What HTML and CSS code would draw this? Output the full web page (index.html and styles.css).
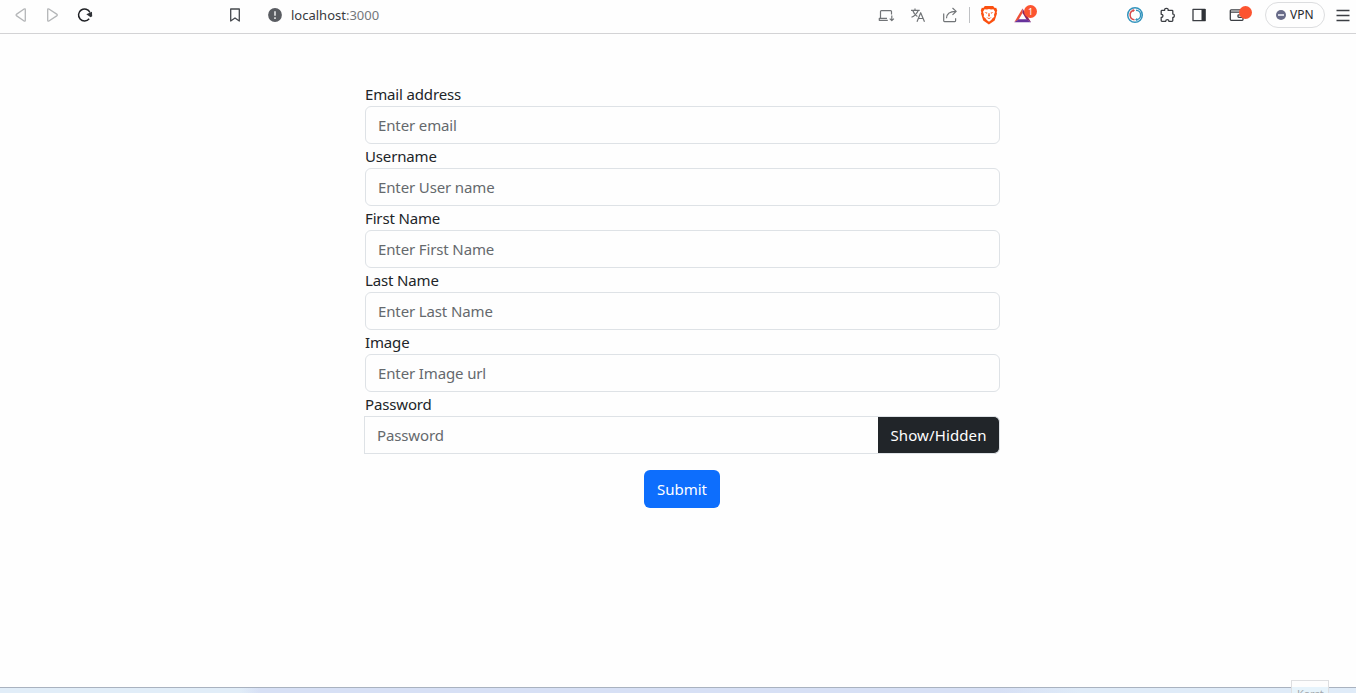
FILE: index.html
```
<!DOCTYPE html>
<html lang="en">
<head>
<meta charset="utf-8">
<title>Sign up</title>
<link rel="stylesheet" href="styles.css">
</head>
<body>
<header class="toolbar">
  <nav class="navigation">
    <svg class="icon faded" viewBox="0 0 20 20"><path d="M14.3 4.7v10.6q0 1.3-1.2.7L5.700 10.900q-1.200-.9 0-1.800l7.400-5.100q1.200-.6 1.200.7z"/></svg>
    <svg class="icon faded" viewBox="0 0 20 20"><path d="M4.700 4.700v10.600q0 1.300 1.200.7l7.800-5.100q1.200-.9 0-1.800L5.900 4q-1.200-.6-1.200.7z"/></svg>
    <svg class="icon reload" viewBox="0 0 20 20"><path d="M14.200 13.800A6 6 0 1 1 15 7.500"/><path class="solid" d="M11.300 9.200l5.600-2.500.3 4.600-1.600 1z"/></svg>
  </nav>
  <svg class="icon bookmark" viewBox="0 0 20 20"><path d="M5.700 4h8.600v12L10 13l-4.300 3z"/></svg>
  <div class="address">
    <svg class="icon" viewBox="0 0 20 20"><circle class="info" cx="10" cy="10" r="6.900"/><path class="mark" d="M10 6.300v4.500M10 12.200v1.700"/></svg>
    <span class="url">localhost<span class="port">:3000</span></span>
  </div>
  <div class="page-actions">
    <svg class="icon grey" viewBox="0 0 20 20"><path d="M11 13.300H3.300v2h8.500M4.500 12.800V6.500q0-.9.900-.9h9.200q.9 0 .9.900v3M15.800 10.500v5M13.700 13.600l2.100 2 2.100-2"/></svg>
    <svg class="icon grey" viewBox="0 0 20 20"><path d="M3 5.300h8.700M7 3.400v1.800M10.200 5.500Q8 10.500 3.500 12.200M4.800 5.500Q6 9.500 9.400 11.500M9 16.700l3.700-9 3.800 9M10.400 13.500H15"/></svg>
    <svg class="icon grey" viewBox="0 0 20 20"><path d="M3.700 8.500v7.300q0 .8.800.8h10.300q.8 0 .8-.8v-2.600M6.500 13.300q.2-7 9.300-7M12.500 3l3.700 3.400-3.700 3.500"/></svg>
  </div>
  <span class="divider"></span>
  <svg class="icon brave" viewBox="0 0 20 20"><path class="shield" d="M5.800.9h8.300l1.700 2 1.400-.1 1 2.700-.6 1.700.4 1.200-2.300 7.200-5.800 3.900-5.700-3.900-2.200-7.200.4-1.200-.6-1.700 1-2.700 1.500.1z"/><path class="lion" d="M5.500 4.300l2.500.3L10 4l2 .6 2.500-.3 1.500 2.500-1 3 .3 1.900-2 1.800-1 1.600-2.300 1.600-2.300-1.600-1-1.600-2-1.800.3-1.900-1-3z"/><path class="face" d="M5.500 7.100l3 .6-.8 1.100zM14.500 7.100l-3 .6.800 1.100zM9.600 8h.8l.5 3-.9.700-.9-.7zM7 12.300l3 .7 3-.7-3 1.700z"/></svg>
  <div class="badged rewards">
    <svg class="icon" viewBox="0 0 20 20"><path class="tri-red" d="M9.500 3.500L1.300 17.200l4.400-2.700 3.800-6.500z"/><path class="tri-side" d="M9.500 3.500V8l4 6.500 4.500 2.700z"/><path class="tri-base" d="M1.300 17.300l4.400-3h8l4.300 3z"/></svg>
    <span class="badge">1</span>
  </div>
  <div class="extensions">
    <svg class="icon sync" viewBox="0 0 20 20"><circle class="ring" cx="10" cy="10" r="7.300"/><path class="arc-red" d="M9.500 14.700A4.700 4.700 0 0 1 8.500 5.500"/><path class="arc-blue" d="M11 5.300a4.700 4.700 0 0 1 0 9.400"/><path class="tip-red" d="M7.500 3.800l2.500 1.500-2 1.700z"/><path class="tip-blue" d="M12.500 16.200l-2.500-1.500 2-1.700z"/></svg>
    <svg class="icon" viewBox="0 0 20 20"><path d="M5 5.300h2.700q-.5-2 1.700-2t1.700 2h4q.7 0 .7.700v3.100q1.500-.2 1.500 1.600t-1.500 1.600v3.200q0 .8-.8.800h-3q-.2-1.700-1.700-1.700t-1.700 1.700H5q-.8 0-.8-.8v-3q1.800-.2 1.800-1.700T4.200 9.300V6q0-.7.800-.7z"/></svg>
    <svg class="icon" viewBox="0 0 20 20"><path d="M4 4.300h12v11.400H4z"/><path class="solid" d="M12.500 4h4v12h-4z"/></svg>
    <div class="badged">
      <svg class="icon wallet" viewBox="0 0 20 20"><path d="M15.500 7.200V5.500q0-.7-.7-.7H4.200q-.9 0-.9.900v8.600q0 1 1 1h10.900q.8 0 .8-.8V8q0-.8-.8-.8H3.400M16 9.800h-4.200q-.8 0-.8.800v1q0 .8.800.8H16"/></svg>
      <span class="badge dot"></span>
    </div>
  </div>
  <button class="vpn"><span class="status"></span>VPN</button>
  <svg class="icon menu" viewBox="0 0 20 20"><path d="M3.500 5.500h13M3.500 10.500h13M3.500 15.500h13"/></svg>
</header>
<main class="page">
  <form class="form">
    <label class="label" for="email">Email address</label>
    <input class="control" id="email" placeholder="Enter email">
    <label class="label" for="user">Username</label>
    <input class="control" id="user" placeholder="Enter User name">
    <label class="label" for="first">First Name</label>
    <input class="control" id="first" placeholder="Enter First Name">
    <label class="label" for="last">Last Name</label>
    <input class="control" id="last" placeholder="Enter Last Name">
    <label class="label" for="image">Image</label>
    <input class="control" id="image" placeholder="Enter Image url">
    <label class="label" for="password">Password</label>
    <div class="password-group">
      <input class="control joined" id="password" type="password" placeholder="Password">
      <button class="toggle" type="button">Show/Hidden</button>
    </div>
    <button class="submit" type="button">Submit</button>
  </form>
</main>
<footer class="taskbar"><span class="tooltip">Kerst</span></footer>
</body>
</html>
```
FILE: styles.css
```
* { box-sizing: border-box; }
body {
  margin: 0;
  height: 693px;
  display: flex;
  flex-direction: column;
  overflow: hidden;
  background: #fefefe;
  color: #212529;
  font: 15px/24px "Noto Sans", "Open Sans", sans-serif;
}
button, input { font: inherit; margin: 0; }

.toolbar {
  display: flex;
  align-items: center;
  height: 34px;
  flex: none;
  padding: 0 3px 4px 11px;
  border-bottom: 1px solid #d3d3d5;
}
.icon {
  display: block;
  width: 20px;
  height: 20px;
  flex: none;
  fill: none;
  stroke: #3b3e43;
  stroke-width: 1.3;
  stroke-linejoin: round;
}
.icon .solid { fill: #2f3237; stroke: none; }
.navigation { display: flex; gap: 12px; }
.faded { stroke: #b4b6b8; }
.reload { stroke: #202226; stroke-width: 1.5; }
.bookmark { margin-left: 130px; stroke: #46494e; }
.address { display: flex; align-items: center; gap: 6px; margin-left: 20px; }
.info { fill: #595c61; stroke: none; }
.mark { stroke: #c9cacc; stroke-width: 2; }
.url { width: 90px; font-size: 13px; line-height: 20px; color: #383a3e; white-space: nowrap; }
.port { color: #74777b; }
.page-actions { display: flex; gap: 12px; margin-left: 495px; }
.grey { stroke: #717477; stroke-width: 1.2; }
.divider { width: 1px; height: 16px; margin-left: 9px; background: #bfc1c4; }
.brave { margin-left: 9px; }
.shield { fill: #fb5010; stroke: none; }
.lion { fill: #fff; stroke: none; }
.face { fill: #fb5010; stroke: none; }
.badged { position: relative; }
.rewards { margin-left: 14px; }
.tri-red { fill: #ef5138; stroke: none; }
.tri-side { fill: #8a2264; stroke: none; }
.tri-base { fill: #67339c; stroke: none; }
.badge {
  position: absolute;
  left: 11px;
  top: 0;
  width: 13px;
  height: 13px;
  border-radius: 50%;
  background: #fc5430;
  color: #fff;
  font-size: 9px;
  line-height: 13px;
  text-align: center;
}
.extensions { display: flex; gap: 12px; margin-left: 92px; }
.extensions .badged { margin-left: 6px; }
.dot { left: 12px; top: 1px; }
.sync { stroke-width: 1.5; }
.ring { stroke: #3494bd; }
.arc-red { stroke: #d94b4b; }
.arc-blue { stroke: #3494bd; }
.tip-red { fill: #d94b4b; stroke: none; }
.tip-blue { fill: #3494bd; stroke: none; }
.vpn {
  display: flex;
  align-items: center;
  gap: 4px;
  width: 60px;
  height: 26px;
  margin-left: 18px;
  padding: 0 0 0 10px;
  border: 1px solid #dcdddf;
  border-radius: 13px;
  background: transparent;
  color: #28292d;
  font-size: 12px;
}
.status {
  display: grid;
  place-items: center;
  width: 10px;
  height: 10px;
  border-radius: 50%;
  background: #686b88;
}
.status::before { content: ""; width: 6px; height: 2px; background: #d5d6e2; }
.menu { margin-left: 8px; stroke-width: 1.5; }

.page { flex: 1; padding-top: 48px; }
.form { display: flex; flex-direction: column; width: 635px; margin-left: 365px; }
.label { height: 24px; line-height: 24px; letter-spacing: -0.15px; }
.control {
  width: 100%;
  height: 38px;
  padding: 6px 12px;
  border: 1px solid #dee2e6;
  border-radius: 6px;
  background: #fefefe;
  color: #212529;
  letter-spacing: -0.13px;
}
.control::placeholder { color: #65696d; opacity: 1; }
.password-group { display: flex; margin-left: -1px; }
.joined { flex: 1; width: auto; border-radius: 0; border-right: 0; }
.toggle {
  width: 122px;
  height: 38px;
  padding: 0;
  border: 1px solid #dee2e6;
  border-left: 0;
  border-radius: 0 6px 6px 0;
  background: #212529;
  color: #fff;
  letter-spacing: 0.12px;
}
.submit {
  width: 76px;
  height: 38px;
  margin: 16px 0 0 279px;
  padding: 0;
  border: 0;
  border-radius: 6px;
  background: #0d6efd;
  color: #fff;
}

.taskbar {
  position: relative;
  height: 6px;
  flex: none;
  border-top: 1px solid #a9b2bf;
  background: linear-gradient(90deg, #e1edf8 0 240px, #d7e0f5 260px 1000px, #dfebf8 1080px);
}
.tooltip {
  position: absolute;
  left: 1291px;
  top: -8px;
  width: 38px;
  height: 13px;
  overflow: hidden;
  padding-left: 5px;
  border: 1px solid #dedfe1;
  border-bottom: 0;
  background: linear-gradient(#fdfdfd 6px, #e6f3fb 6px);
  color: #a4a9ae;
  font-size: 11px;
  line-height: 26px;
}
```
